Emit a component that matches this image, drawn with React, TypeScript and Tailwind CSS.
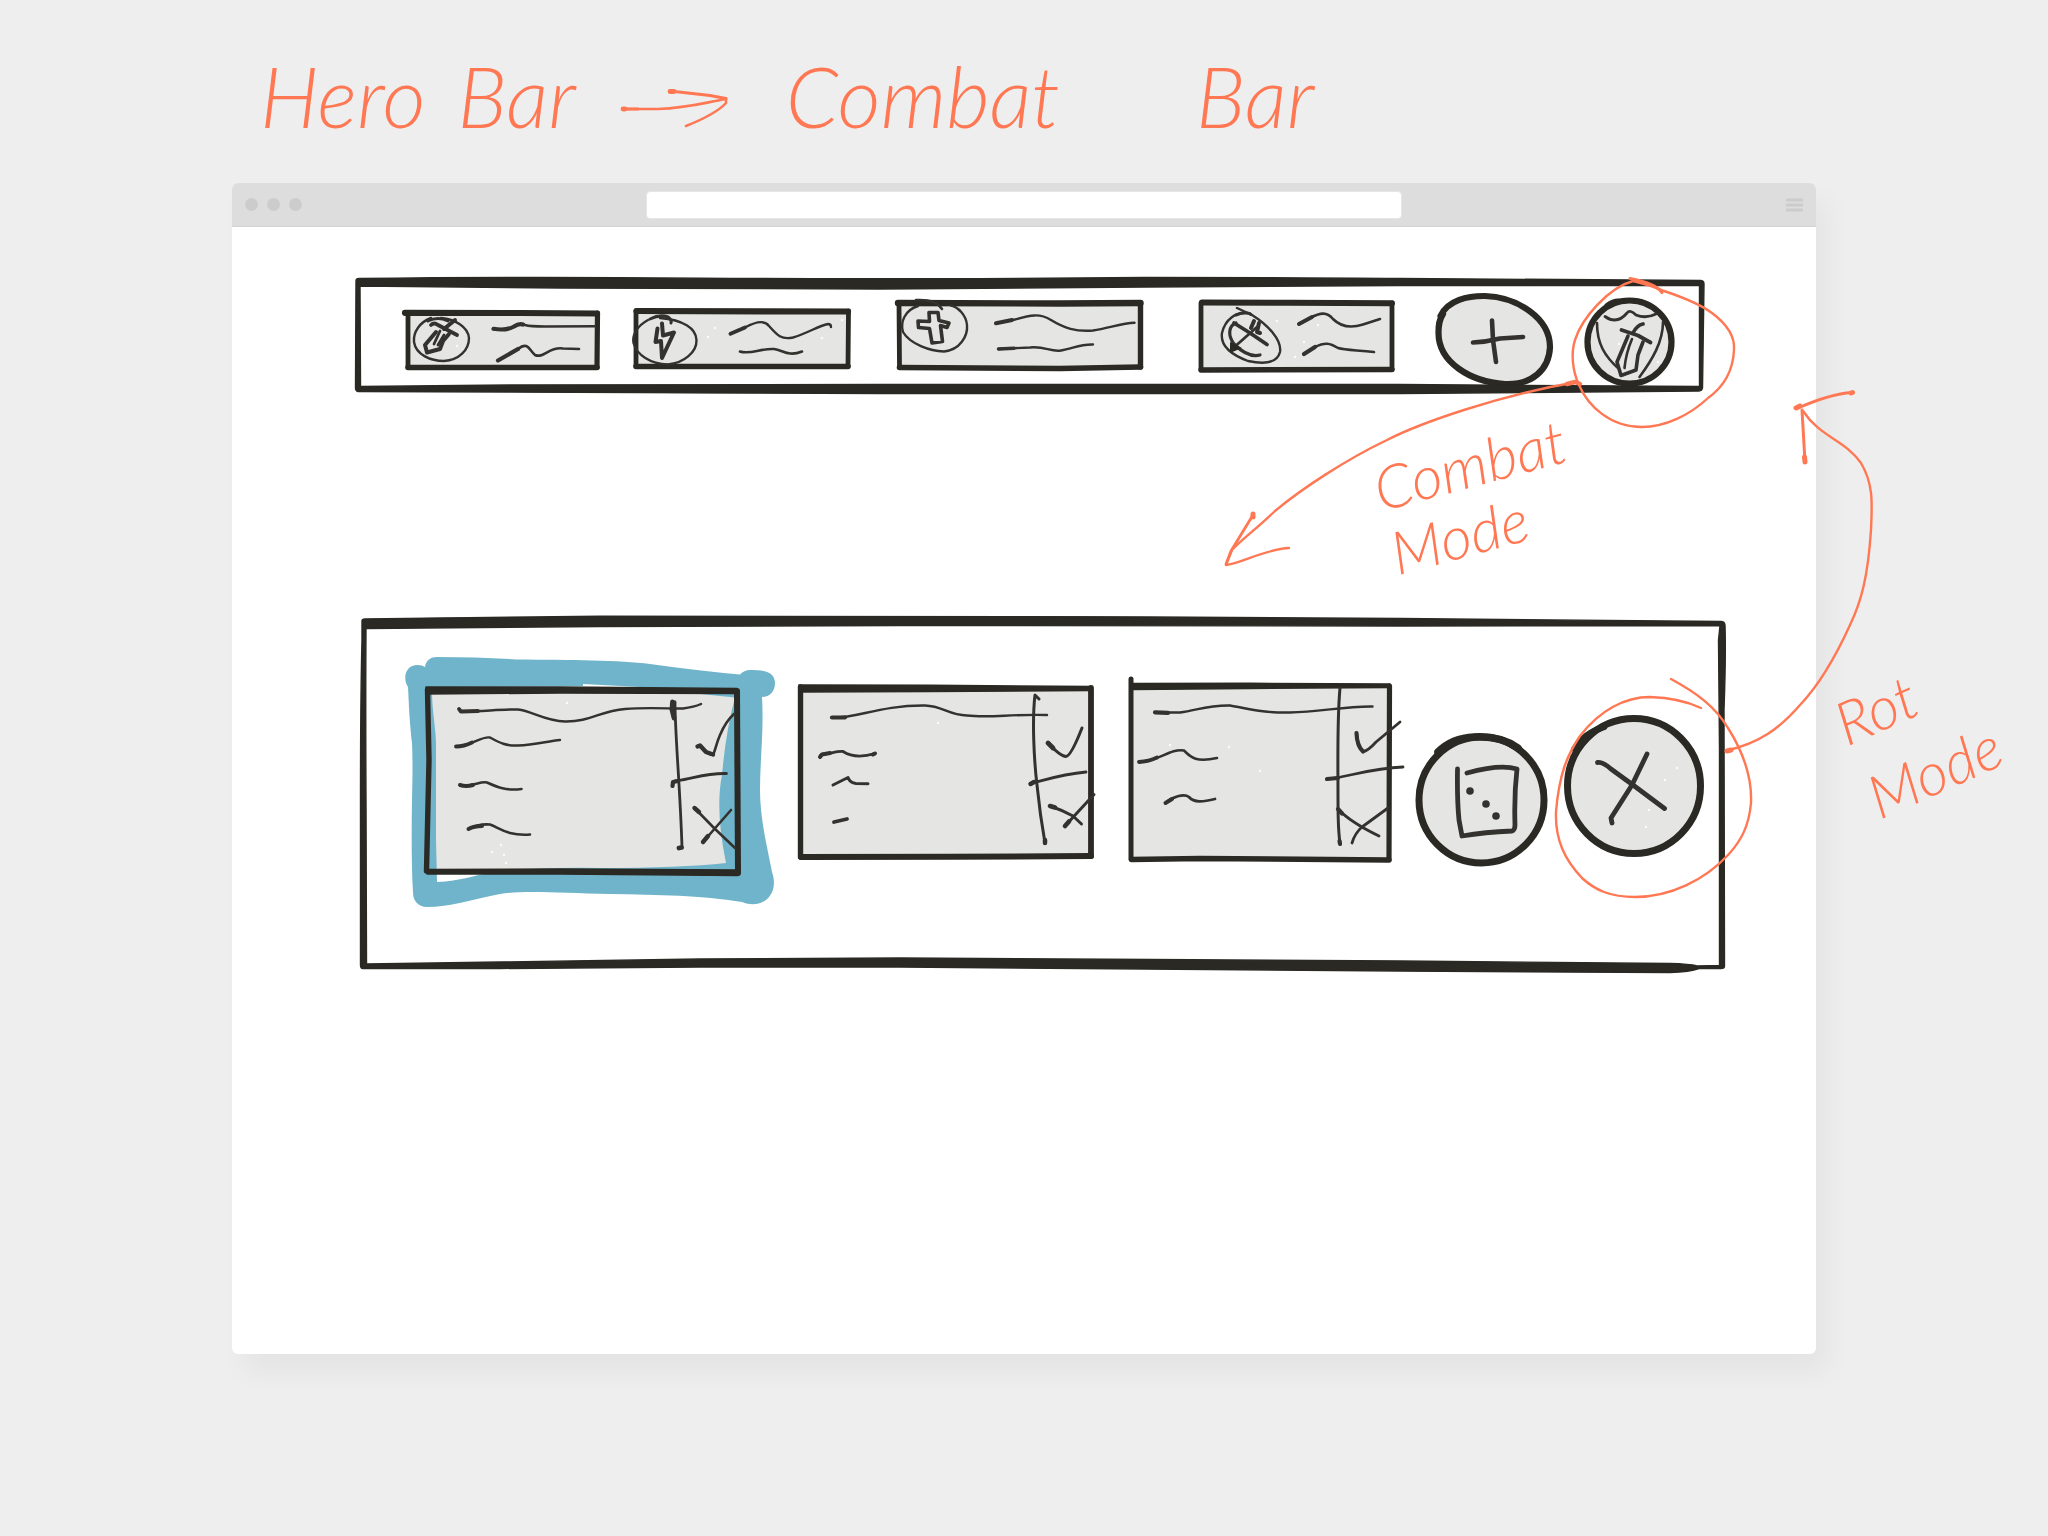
import type { ReactNode } from "react";

const INK = "#2a2924";
const PEN = "#33322f";
const FILL = "#e5e5e3";
const ORANGE = "#ff7853";
const BLUE = "#6fb4ca";

/** One pen stroke with round ends. */
function Stroke({ d, w = 2.4, color = PEN, fill = "none" }: { d: string; w?: number; color?: string; fill?: string }) {
  return <path d={d} fill={fill} stroke={color} strokeWidth={w} strokeLinecap="round" strokeLinejoin="round" />;
}

/** A heavy outline edge that thins out along its length. */
function Taper({ d }: { d: string }) {
  return <path d={d} fill={INK} stroke={INK} strokeWidth="1.5" strokeLinejoin="round" />;
}

/** A piece of the board, drawn in board coordinates. */
function Piece({ x, y, w, h, children }: { x: number; y: number; w: number; h: number; children: ReactNode }) {
  return (
    <svg width={w} height={h} viewBox={`${x} ${y} ${w} ${h}`} className="block shrink-0 overflow-visible" aria-hidden="true">
      {children}
    </svg>
  );
}

/** Little specks left by the fill brush. */
function Specks({ at }: { at: [number, number][] }) {
  return (
    <>
      {at.map(([x, y]) => (
        <circle key={`${x}-${y}`} cx={x} cy={y} r="1.2" fill="#fbfbfb" />
      ))}
    </>
  );
}

function BarFrame({ viewBox, d }: { viewBox: string; d: string }) {
  return (
    <svg viewBox={viewBox} preserveAspectRatio="none" className="pointer-events-none absolute inset-0 size-full overflow-visible" aria-hidden="true">
      <path d={d} fill={INK} fillRule="evenodd" stroke={INK} strokeWidth="1.4" strokeLinejoin="round" />
    </svg>
  );
}

function HeroBar() {
  return (
    <nav aria-label="Hero bar" className="relative ml-[123px] mr-[111px] flex items-center justify-between gap-8 pt-[15px] pr-[30px] pb-[6px] pl-[45px]">
      <BarFrame
        viewBox="355 277 1350 117"
        d="M356 281 Q356 278.500 359 278.500 Q520 276.500 700 278.200 Q900 279.500 1145 277.500 Q1300 277.500 1400 278.500 L1701 280.500 Q1704 281 1704 284 L1702.500 388 Q1702 391 1699 391 L1400 393.500 L880 393.500 Q600 393 512 392 L358 391.500 Q355.500 391 355.500 388 Z M360 286 L360.500 386.500 L512 385 L880 384.500 L1400 384.500 L1699.500 386.500 L1699.500 285.500 L1400 285.500 L1145 287 L880 289 L560 288 Z"
      />
      <button type="button" aria-label="Hero with sword">
        <Piece x={400} y={292} w={200} h={96}>
          <path d="M408 313 H597 V368 H408 Z" fill={FILL} />
          <Stroke d="M408 314 L408 367" w={4.8} color={INK} />
          <Stroke d="M408 367.500 L597 367.500" w={5.6} color={INK} />
          <Stroke d="M597.500 313 L597 367" w={5.2} color={INK} />
          <Stroke d="M405 312.800 L520 313 L597 313.500" w={6.2} color={INK} />
          <Stroke d="M431 318 C420 322 413 332 414 342 C416 355 431 361 444 361 C459 360 469 350 469 338 C468 327 455 319 441 318" />
          <Stroke d="M428 321 Q438 316 448 321" w={3} />
          <Stroke d="M431 325 Q434 322 438 325 L457 335" w={3.8} />
          <Stroke d="M455 320 L444 329" w={4} />
          <Stroke d="M436 332 L425 345 L427 352.500 L440 349 L443 341 L449 334" w={4} />
          <Stroke d="M440 331 L434 344 M444 335 L438 345" w={2.8} />
          <Stroke d="M493 329 Q506 331 514 327 Q520 322 525 325 Q530 326.500 545 326.500 L595 326.300" />
          <Stroke d="M493.500 328.800 Q506 331 514 326.500 Q519 323 523 324.500" w={4.2} />
          <Stroke d="M498 360.500 L518 349 C528 341 529 350 535 355 C543 359 550 346 563 348.500 L579 349" w={2.6} />
          <Stroke d="M498 360.500 L518 349" w={4.2} />
          <Specks at={[[457, 346]]} />
        </Piece>
      </button>
      <button type="button" aria-label="Hero with lightning">
        <Piece x={632} y={292} w={224} h={96}>
          <path d="M636 311 H848 V367 H636 Z" fill={FILL} />
          <Stroke d="M636 311 L636 366" w={4.8} color={INK} />
          <Stroke d="M636 366.500 L848 366.500" w={5.6} color={INK} />
          <Stroke d="M848.500 311 L848 366" w={4.8} color={INK} />
          <Stroke d="M636.500 311 L848 311.500" w={6.2} color={INK} />
          <Stroke d="M648 320 C637 326 632 335 633.500 343 C637 355 650 364 668 364.500 C684 363 697 352 696.500 340 C696 328 683 320 660 318" />
          <Stroke d="M650 319 Q660 314 668 317 Q672 320 671 323" w={3} />
          <Stroke d="M662 323.500 L663 335.500 L674 332.500 L662 358 L661 341 L655.500 342 L657.500 328.500" w={4} />
          <Stroke d="M730 334 L745 327.500 C755 322 764 319 769 326 C777 335 781 340 793 337.500 C808 333 818 326 828 324 Q831 324 831 327" />
          <Stroke d="M730.500 333.800 L745 327.500" w={3.8} />
          <Stroke d="M740 351.500 C750 355 762 348 774 349 C783 350 788 357 802 351.500" w={2.600} />
          <Specks at={[[708, 337], [822, 338], [842, 320], [715, 328]]} />
        </Piece>
      </button>
      <button type="button" aria-label="Hero with cross">
        <Piece x={888} y={292} w={262} h={96}>
          <path d="M899 303 H1140 V368 H899 Z" fill={FILL} />
          <Stroke d="M899 303 L899.500 367" w={4.8} color={INK} />
          <Stroke d="M899.500 367.500 L1060 368.500 L1140.500 367" w={5.6} color={INK} />
          <Stroke d="M1140.500 303 L1140.500 367" w={5.4} color={INK} />
          <Stroke d="M898 303 L1060 303.500 L1140.500 303" w={6.4} color={INK} />
          <Stroke d="M918 306 C905 310 900 322 903 332 C910 344 930 351 944 351.500 C960 350 968 336 967 325 C966 315 958 307 951 305.500" />
          <Stroke d="M916 300 Q936 299 942 309" w={2.500} />
          <Stroke d="M929 312.500 L938 312.500 L939 320.500 L949 323 L947 327.500 L940.500 325.500 L942.500 341.500 L932 343 L929.500 328.500 L918.500 327.500 L918 321 L929.500 321.500 Z" w={3.6} />
          <Stroke d="M996 323.500 L1015 319.500 C1030 315 1040 313 1051 320 C1064 328 1076 332 1093 330.500 C1108 328.500 1122 323 1134.500 322.800" />
          <Stroke d="M996 323.300 L1012 320" w={4} />
          <Stroke d="M998.500 349 L1030 347.500 C1045 346 1050 352 1061 350.500 C1072 349 1080 344 1093 344.500" />
          <Stroke d="M998.500 349 L1014 348.300" w={3.500} />
        </Piece>
      </button>
      <button type="button" aria-label="Hero with crossed swords">
        <Piece x={1182} y={292} w={218} h={96}>
          <path d="M1201 303 H1392 V370 H1201 Z" fill={FILL} />
          <Stroke d="M1201 303 L1201 369.500" w={4.800} color={INK} />
          <Stroke d="M1201 370 L1392 369.500" w={5.400} color={INK} />
          <Stroke d="M1392 303 L1392 369.500" w={4.800} color={INK} />
          <Stroke d="M1202 302.500 L1290 302.800 L1392 303.200" w={6} color={INK} />
          <Stroke d="M1237 308 L1252 315 C1268 325 1282 340 1280 352 C1277 364 1262 364 1248 361 C1232 355 1220 346 1222 333 C1225 320 1235 311 1250 313.500" />
          <Stroke d="M1236 315 Q1246 311 1251 314.500" w={3} />
          <Stroke d="M1234 323 L1250 333 L1267 344.500" w={3.800} />
          <Stroke d="M1236 323 C1228 326 1228 336 1234 344 C1243 353 1252 357 1260 355" w={3.200} />
          <Stroke d="M1257 327 L1231 350" w={2.800} />
          <path d="M1230 342 L1242 348 L1230 353 Z" fill={INK} />
          <Stroke d="M1254 321 L1251 328 M1259 323 L1257 332 L1260 333" w={4} />
          <Stroke d="M1299 324 L1310 318 C1321 312 1327 312 1333 319 C1342 328 1352 328 1363 324.500 L1380 319" w={2.600} />
          <Stroke d="M1299 324 L1312 317" w={4} />
          <Stroke d="M1304 354 L1315 347 C1325 342 1330 343 1338 348 C1345 350 1355 350 1374 352" w={2.600} />
          <Stroke d="M1304 354 L1315 347" w={4.200} />
          <Specks at={[[1318, 325], [1304, 342], [1295, 357], [1277, 321]]} />
        </Piece>
      </button>
      <button type="button" aria-label="Add hero">
        <Piece x={1432} y={292} w={121} h={96}>
          <Stroke
            d="M1440.500 316 C1448 300 1468 295.800 1485 296 C1517 297 1550 318 1550 347 C1549 370 1532 385 1505 384 C1470 382 1438.500 362 1438.500 333 C1438.500 325 1439 320 1443 314"
            w={6.200}
            color={INK}
            fill={FILL}
          />
          <Stroke d="M1473 342.500 Q1486 342 1500 338.500 L1523 337" w={4.600} />
          <Stroke d="M1492 320.500 L1493 340 L1496 362" w={4.600} />
        </Piece>
      </button>
      <button type="button" aria-label="Combat mode">
        <Piece x={1585} y={292} w={90} h={96}>
          <ellipse cx="1629.500" cy="342" rx="42" ry="41.500" fill={FILL} stroke={INK} strokeWidth="6.200" />
          <Stroke d="M1607 305.500 Q1613 301 1618 301" w={5} color={INK} />
          <Stroke d="M1605 316.500 Q1617 325 1627 313 Q1630 309 1636 315 Q1646 319 1656 314" w={2.800} />
          <Stroke d="M1597 323 C1597 343 1604 356 1620 370" w={2.600} />
          <Stroke d="M1663 322 C1663 342 1652 360 1639.500 377" w={2.600} />
          <Stroke d="M1643 324 Q1637 325 1633 333" w={3.800} />
          <Stroke d="M1621.500 330 L1638 335.500 L1650.500 342.500" w={3.800} />
          <Stroke d="M1628 336 L1617 362 L1621 375.500 L1636 370 L1638 355 L1643 342" w={3.600} />
          <Stroke d="M1632 339 Q1626 353 1624.500 368" w={2.600} />
          <Specks at={[[1658, 362], [1619, 344]]} />
        </Piece>
      </button>
    </nav>
  );
}

function CombatCard({ name, body, check, cross }: { name: string; body: ReactNode; check: ReactNode; cross: ReactNode }) {
  return (
    <article aria-label={name} className="flex shrink-0">
      {body}
      <div className="flex flex-col">
        <button type="button" aria-label={`Confirm ${name}`}>{check}</button>
        <button type="button" aria-label={`Dismiss ${name}`}>{cross}</button>
      </div>
    </article>
  );
}

function CombatBar() {
  return (
    <section aria-label="Combat bar" className="relative mt-[221px] ml-[128px] mr-[90px] flex items-center justify-between gap-3 pt-[40px] pr-[20px] pb-[66px] pl-[44px]">
      <BarFrame
        viewBox="360 615 1366 359"
        d="M362 621 Q362 619 365 619 Q500 617 600 616.200 Q900 615.500 1150 617 L1400 618.500 L1721 621.500 Q1724.500 621.500 1725 625 Q1726 655 1724 710 L1724.500 966 Q1724.500 968.500 1721 968.500 L1699 968.500 Q1690 972 1670 972.500 Q1600 972.500 1400 971 L900 967 L700 967 L500 968.500 L363 968.500 Q360.500 968.500 360.500 965 L360.500 800 Q360.500 700 362 640 Z M366 628.500 Q365.500 700 366 800 L366.500 964 L500 962 L700 959 L900 958 L1150 959.500 L1400 961 L1670 963.500 Q1690 964 1697 966 L1719.500 965.500 L1719.500 750 L1718.500 640 L1720 625.500 L1400 626 L900 625.500 L600 626.500 Z"
      />
      <CombatCard
        name="Hero 1"
        body={
          <Piece x={404} y={655} w={280} h={253}>
            <path d="M428 690 H737 V872 H428 Z" fill={FILL} />
            <path
              fill={BLUE}
              fillRule="evenodd"
              d="M408 687 C403 680 404 665 418 665 Q422 665 425 667 C426 660 431 657 437 657 Q480 657 517 659.500 C570 660 620 660 650 664 Q700 671 740 674.500 Q744 670 750 670 C762 670 775 671 775 683 C775 691 770 697 762 697 C764 730 760 760 760 790 C760 820 768 850 772 872 C780 895 762 910 742 902 C700 895 660 895 610 894 C560 893 525 890 500 894 C470 900 450 907 427 907 C418 907 413 900 413 893 Q411 860 412 800 Q413 765 412 743 C409 715 409 705 408 687 Z M432 692 C432 710 436 730 436 745 V840 L437 882 C460 881 475 875 490 873 Q530 867 600 868 Q680 868 726 863 Q715 810 722 775 Q726 730 735 697.500 L700 694 L640 687 L583 684 L583 686 L432 687 Z"
            />
            <Stroke d="M427.500 690 L429 760 L426.500 871" w={5.400} color={INK} />
            <Taper d="M427 869.500 L560 869 L738 870 V875.500 L560 874 L427 874 Z" />
            <Stroke d="M737 691 L738 873" w={6} color={INK} />
            <Taper d="M426 687 L560 687 L737 688.500 V693.500 L560 693 L426 694 Z" />
            <Stroke d="M460 711.500 C480 712 500 709 518 709.500 C532 711 545 721 565 721.500 C590 722 600 711 625 709 C650 707 672 709 683 708.500 Q694 707 701 704" />
            <Stroke d="M459 709 L461 711.500 L478 711" w={3.800} />
            <Stroke d="M456 746.500 C472 746 481 736 490 737.500 C500 743 506 746 518 745.500 C535 745 548 741 560 740" />
            <Stroke d="M456 746.500 Q464 746.500 472 742.500" w={3.800} />
            <Stroke d="M460 785.500 C472 787 480 781 487 782.500 C497 787 505 791 521.500 789" w={2.600} />
            <Stroke d="M460 785 Q466 787 473 785" w={4} />
            <Stroke d="M468.500 829 C476 825 484 824 490 824.500 C500 828 507 836 530 834.500" w={2.600} />
            <Stroke d="M468.500 829 Q474 826 482 826" w={4} />
            <Stroke d="M672.500 702 L672 710 L674 718" w={4.800} />
            <Stroke d="M675 702 C675 735 680 785 682 847" w={2.800} />
            <Stroke d="M679 848 L681.500 847.500" w={4.800} />
            <Stroke d="M672.500 785 Q672 781 678 780.500 C692 779 705 773 726.500 773.500" w={2.800} />
            <Stroke d="M672.500 786 L673 782 L678 781" w={4.200} />
            <Specks at={[[504, 855], [501, 845], [506, 863], [567, 703], [492, 852]]} />
          </Piece>
        }
        check={
          <Piece x={684} y={655} w={94} h={127}>
            <Stroke d="M697.500 746.500 Q700 744 703 749 Q708 755 713 754.500 C715 752 716 744 720 735 Q726 721 734 714" w={2.600} />
            <Stroke d="M697.500 746.500 L700 745.500 L706 752 L713 754.500" w={4.400} />
          </Piece>
        }
        cross={
          <Piece x={684} y={782} w={94} h={126}>
            <Stroke d="M694.500 808 L714 828 L735 848 M731 810 L703 842" w={2.600} />
            <Stroke d="M694.500 808 L699 812 M703 842 L708 836" w={4.400} />
          </Piece>
        }
      />
      <CombatCard
        name="Hero 2"
        body={
          <Piece x={790} y={655} w={254} h={253}>
            <path d="M800 687 H1091 V857 H800 Z" fill={FILL} />
            <Stroke d="M800.500 687 L800.500 857" w={5.400} color={INK} />
            <Stroke d="M801 857 L950 856.800 L1091 856" w={6} color={INK} />
            <Stroke d="M1091 688 L1091 856" w={5.800} color={INK} />
            <Taper d="M799 685 L930 685.300 L1092 686.500 V690.500 L930 691.500 L799 692 Z" />
            <Stroke d="M832 717.500 C855 719 880 705 925 705.500 C943 706 948 715 967 715.500 C990 718 1010 714 1047 715" />
            <Stroke d="M832 717.500 L845 717.500" w={4.200} />
            <Stroke d="M820 757 Q820 754 825 754 C832 753 838 751 843 751.500 C850 756 860 758 875 753.500" w={2.800} />
            <Stroke d="M820 757 L822 754.500 L830 753 M873 754.500 L875 753.500" w={4} />
            <Stroke d="M833 785 L848 777.500 Q850 783 856 783.500 L868 783.700" w={3} />
            <Stroke d="M834 822 L847 819" w={3.800} />
            <Stroke d="M1039 699 L1035 695 C1032 720 1034 760 1037 785 Q1040 815 1045 843" w={3} />
            <Stroke d="M1031 783.500 C1045 780 1062 774 1086 772" w={2.800} />
            <Stroke d="M1030.500 784 L1034 782 M1045 840 L1045 843" w={4.500} />
            <Specks at={[[938, 723]]} />
          </Piece>
        }
        check={
          <Piece x={1044} y={655} w={54} h={127}>
            <Stroke d="M1048 743 Q1060 756 1066 756.500 Q1071 756 1082 728" w={3} />
            <Stroke d="M1048 743 L1053 748" w={4.800} />
          </Piece>
        }
        cross={
          <Piece x={1044} y={782} w={54} h={126}>
            <Stroke d="M1050 806 Q1062 810 1073 816 L1081.500 824 M1094 794.500 L1065 826" w={3} />
            <Stroke d="M1050 806 L1055 807.500 M1065 826 L1069 821.500" w={4.600} />
          </Piece>
        }
      />
      <CombatCard
        name="Hero 3"
        body={
          <Piece x={1110} y={655} w={230} h={253}>
            <path d="M1131 686 H1389 V859 H1131 Z" fill={FILL} />
            <Stroke d="M1131 679 L1131 859" w={5} color={INK} />
            <Stroke d="M1131.500 859.500 L1200 858.500 L1389 860" w={5.400} color={INK} />
            <Stroke d="M1389.500 686 L1389 859.500" w={5.200} color={INK} />
            <Taper d="M1132 683.500 L1250 683.300 L1390 684 V687.500 L1250 688.500 L1132 689.500 Z" />
            <Stroke d="M1155 712.500 L1180 712.500 C1198 710 1208 705 1230 705.500 C1250 709 1262 713 1290 712.500 C1320 712 1345 706 1372.500 706.500" />
            <Stroke d="M1155 712.300 L1168 712.800" w={4.200} />
            <Stroke d="M1139 762 C1158 762 1170 748 1184 750.500 C1190 756 1194 763 1217 758" w={2.600} />
            <Stroke d="M1139 762 Q1149 761.500 1157 757.500" w={3.800} />
            <Stroke d="M1165.500 803 C1172 797 1184 793 1189 797 C1194 803 1203 802 1215 799" w={2.800} />
            <Stroke d="M1165.500 803 L1172 799" w={4} />
            <Stroke d="M1340 688 C1337 720 1338 760 1338 800 Q1338 830 1340 843" w={3} />
            <Stroke d="M1327 779 C1345 778 1370 768 1403 767" w={2.800} />
            <Stroke d="M1327 779 L1338 778 M1339.500 841 L1340 844" w={4.200} />
            <Specks at={[[1260, 771], [1229, 747], [1170, 745]]} />
          </Piece>
        }
        check={
          <Piece x={1340} y={655} w={64} h={127}>
            <Stroke d="M1356.500 733 Q1357 748 1363 751.500 Q1368 751 1376 742 L1400 722" w={2.800} />
            <Stroke d="M1356.500 733 Q1357 746 1363 751.500" w={4.200} />
          </Piece>
        }
        cross={
          <Piece x={1340} y={782} w={64} h={126}>
            <Stroke d="M1338 809 Q1350 822 1379 836 M1388 808 L1362 827 Q1355 833 1352 843" w={2.800} />
            <Stroke d="M1338 809 L1342 813.500" w={4.200} />
          </Piece>
        }
      />
      <button type="button" aria-label="Roll dice">
        <Piece x={1416} y={655} w={134} h={253}>
          <ellipse cx="1481.500" cy="800" rx="62.500" ry="63" fill={FILL} stroke={INK} strokeWidth="7" />
          <Stroke d="M1438 752 Q1452 738 1474 737 Q1500 735.500 1518 748" w={7.500} color={INK} />
          <Stroke d="M1457.500 769 Q1457 800 1459 820 L1462 836 Q1485 832 1512 831 Q1515 830 1515 825 Q1514 795 1517 769 Q1500 764 1467 773" w={4.800} />
          <circle cx="1470" cy="791" r="3.800" fill={PEN} />
          <circle cx="1486" cy="804" r="3.800" fill={PEN} />
          <circle cx="1496" cy="816" r="3.800" fill={PEN} />
        </Piece>
      </button>
      <button type="button" aria-label="Leave combat mode">
        <Piece x={1562} y={655} w={144} h={253}>
          <ellipse cx="1634" cy="786" rx="66.500" ry="67.500" fill={FILL} stroke={INK} strokeWidth="7" />
          <Stroke d="M1574.500 749 Q1584 733 1604 727" w={6.500} color={INK} />
          <Stroke d="M1597.500 762.500 Q1603 762 1611 769 L1633 785 L1664.500 808.500 M1647 754 L1632 785 L1611 818 L1612 823" w={4.800} />
          <Specks at={[[1677, 768], [1646, 827], [1649, 810], [1665, 780]]} />
        </Piece>
      </button>
    </section>
  );
}

function BrowserWindow() {
  return (
    <div className="mx-[232px] rounded-md bg-white shadow-[12px_18px_28px_rgba(0,0,0,0.045)]">
      <div className="flex h-11 items-center justify-between rounded-t-md border-b border-[#d2d2d2] bg-[#dddddd] px-[13px]">
        <div className="flex w-[60px] gap-[9px]">
          <span className="size-[13px] rounded-full bg-[#cccccc]" />
          <span className="size-[13px] rounded-full bg-[#cccccc]" />
          <span className="size-[13px] rounded-full bg-[#cccccc]" />
        </div>
        <input aria-label="Address" className="h-7 w-[756px] max-w-1/2 rounded-sm border border-[#e6e6e6] bg-white px-3 text-sm outline-none" />
        <button type="button" aria-label="Menu" className="flex w-[60px] justify-end">
          <svg width="17" height="14" viewBox="0 0 17 14" aria-hidden="true">
            <path d="M1 2 H16 M1 7 H16 M1 12 H16" stroke="#cccccc" strokeWidth="3" strokeLinecap="round" />
          </svg>
        </button>
      </div>
      <main className="pt-[50px] pb-[380px]">
        <HeroBar />
        <CombatBar />
      </main>
    </div>
  );
}

function Annotations() {
  return (
    <div className="pointer-events-none absolute inset-0 overflow-hidden text-[60px] font-light text-[#ff7853] italic">
      <svg width="2048" height="1536" viewBox="0 0 2048 1536" className="absolute top-0 left-0" aria-hidden="true">
        <Stroke color={ORANGE} d="M1630 278.500 Q1655 283 1662 292.500" w={3} />
        <Stroke
          color={ORANGE}
          d="M1633 281 Q1650 285 1664 291 C1682 297 1700 304 1712 313 C1728 325 1735 338 1734 350 C1733 372 1722 388 1708 398 C1690 415 1665 427 1642 427 C1610 427 1588 406 1579 385 C1572 370 1571 352 1575 340 C1582 318 1608 288 1633 281"
        />
        <Stroke color={ORANGE} d="M1577 382 C1500 395 1420 423 1387 440 C1345 460 1300 490 1275 511 C1255 530 1240 541 1232 550 L1226 565 C1240 564 1265 549 1289 548" />
        <Stroke color={ORANGE} d="M1567 384 L1575 382 L1580 384" w={4.500} />
        <Stroke color={ORANGE} d="M1253 515 L1231 551 L1226 564" w={2.800} />
        <Stroke color={ORANGE} d="M1253 514 L1253 517" w={5} />
        <Stroke color={ORANGE} d="M1803 411 C1820 437 1845 440 1861 463 C1874 485 1872 505 1871 530 C1868 575 1862 600 1850 625 C1835 658 1820 684 1800 705 C1780 728 1760 743 1727 750.500" />
        <Stroke color={ORANGE} d="M1852 392.500 Q1830 394 1798 408 M1802 410 L1805 462" w={3} />
        <Stroke color={ORANGE} d="M1796 408 L1800 406 M1804.500 457 L1805 462 M1727 751 L1731 750 M1851 393 L1852.500 392.500" w={5} />
        <Stroke
          color={ORANGE}
          d="M1671 679 C1695 692 1715 706 1728 728 C1745 755 1752 780 1751 803 C1749 825 1742 840 1728 855 C1705 880 1670 897 1635 897 C1610 897 1595 890 1582 878 C1565 860 1555 840 1556 812 C1559 775 1567 755 1580 736 C1600 710 1625 697 1650 697 Q1680 698 1701 708"
        />
      </svg>
      <p className="absolute top-[430px] left-[1380px] -rotate-15 leading-[66px]">
        Combat
        <br />
        Mode
      </p>
      <p className="absolute top-[654px] left-[1848px] -rotate-24 leading-[80px]">
        Rot
        <br />
        Mode
      </p>
    </div>
  );
}

export default function App() {
  return (
    <div className="relative min-h-screen w-full overflow-hidden bg-[#eeeeee] pb-[182px] font-['Lato','Open_Sans',sans-serif]">
      <header className="flex h-[183px] items-center px-[260px] pt-2">
        <h1 className="flex items-center gap-8 text-[84px] leading-none font-light text-[#ff7853] italic">
          <span>Hero</span>
          <span>Bar</span>
          <svg width="110" height="72" viewBox="622 60 110 72" role="img" aria-label="to" className="mr-6 ml-3">
            <Stroke color={ORANGE} d="M625 109 L660 109 C690 108 705 103 728 99 L728 103 Q718 114 688 126" w={2.600} />
            <Stroke color={ORANGE} d="M672 91 L712 95.500 L728 98.500 M625 109 L640 109" w={3.200} />
            <Stroke color={ORANGE} d="M625 109 L627 109 M672 91.500 L676 91.500" w={4.800} />
          </svg>
          <span className="mr-26">Combat</span>
          <span>Bar</span>
        </h1>
      </header>
      <BrowserWindow />
      <Annotations />
    </div>
  );
}
